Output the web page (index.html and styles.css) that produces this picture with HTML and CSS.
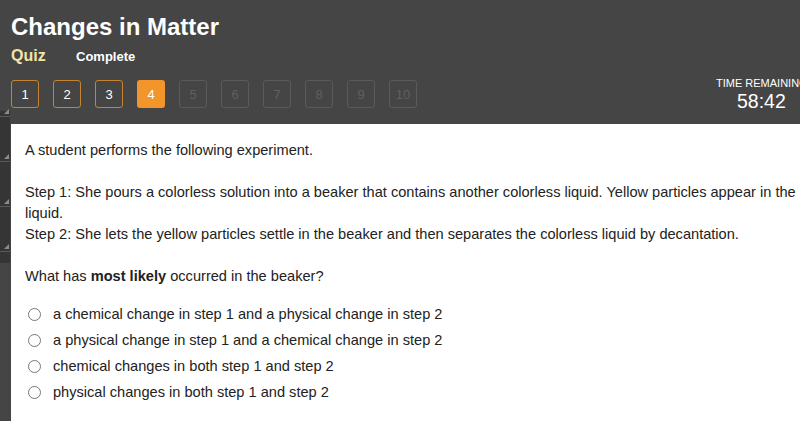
FILE: index.html
```html
<!DOCTYPE html>
<html>
<head>
<meta charset="utf-8">
<link rel="stylesheet" href="styles.css">
</head>
<body>
<div class="page">
  <header class="header">
    <h1 class="title">Changes in Matter</h1>
    <div class="sub">
      <span class="quiz">Quiz</span>
      <span class="status">Complete</span>
    </div>
    <div class="navrow">
      <div class="nums">
        <span class="num done">1</span>
        <span class="num done">2</span>
        <span class="num done">3</span>
        <span class="num active">4</span>
        <span class="num future">5</span>
        <span class="num future">6</span>
        <span class="num future">7</span>
        <span class="num future">8</span>
        <span class="num future">9</span>
        <span class="num future">10</span>
      </div>
      <div class="timer">
        <div class="tlabel">TIME REMAINING</div>
        <div class="tval">58:42</div>
      </div>
    </div>
  </header>
  <div class="main">
    <div class="side">
      <div class="tab first"></div>
      <div class="tab"></div>
      <div class="tab"></div>
      <div class="tab"></div>
      <div class="tab last"></div>
    </div>
    <div class="content">
      <p>A student performs the following experiment.</p>
      <p>Step 1: She pours a colorless solution into a beaker that contains another colorless liquid. Yellow particles appear in the liquid.<br>Step 2: She lets the yellow particles settle in the beaker and then separates the colorless liquid by decantation.</p>
      <p>What has <b>most likely</b> occurred in the beaker?</p>
      <ul class="opts">
        <li><span class="radio"></span>a chemical change in step 1 and a physical change in step 2</li>
        <li><span class="radio"></span>a physical change in step 1 and a chemical change in step 2</li>
        <li><span class="radio"></span>chemical changes in both step 1 and step 2</li>
        <li><span class="radio"></span>physical changes in both step 1 and step 2</li>
      </ul>
    </div>
  </div>
</div>
</body>
</html>
```
FILE: styles.css
```css
html, body {
  margin: 0;
  padding: 0;
  background: #454545;
  overflow: hidden;
}
.page {
  width: 800px;
  height: 421px;
  display: flex;
  flex-direction: column;
  font-family: "Liberation Sans", Arial, sans-serif;
}
.header {
  padding: 13px 0 0 11px;
  height: 111px;
  box-sizing: border-box;
  background: #454545;
}
.title {
  margin: 0;
  font-size: 24px;
  line-height: 28px;
  font-weight: bold;
  color: #ffffff;
}
.sub {
  display: flex;
  align-items: baseline;
  margin-top: 6px;
  height: 22px;
}
.quiz {
  font-size: 16px;
  font-weight: bold;
  color: #f4e3a8;
  width: 65px;
}
.status {
  font-size: 13px;
  font-weight: bold;
  color: #ffffff;
}
.navrow {
  display: flex;
  justify-content: space-between;
  margin-top: 11px;
}
.nums {
  display: flex;
  gap: 14px;
}
.num {
  width: 28px;
  height: 28px;
  box-sizing: border-box;
  border-radius: 3px;
  display: flex;
  align-items: center;
  justify-content: center;
  font-size: 13px;
}
.num.done {
  border: 1px solid #c8832e;
  color: #ffffff;
}
.num.active {
  background: #f2952a;
  color: #ffffff;
}
.num.future {
  border: 1px solid #5a5a5a;
  color: #606060;
}
.timer {
  width: 84px;
  margin-top: -3px;
  white-space: nowrap;
  overflow: hidden;
}
.tlabel {
  font-size: 11px;
  line-height: 13px;
  color: #ffffff;
}
.tval {
  font-size: 19.5px;
  line-height: 22px;
  color: #ffffff;
  padding-left: 21px;
}
.main {
  flex: 1;
  display: flex;
  min-height: 0;
}
.side {
  width: 10px;
  margin-right: 1px;
  display: flex;
  flex-direction: column;
}
.tab {
  height: 44px;
  background: #353535;
  border-bottom: 1px solid #5a5a5a;
  position: relative;
  flex: none;
}
.tab::after {
  content: "";
  position: absolute;
  right: 1px;
  bottom: 2px;
  width: 0;
  height: 0;
  border-left: 5px solid transparent;
  border-bottom: 5px solid #8c8c8c;
}
.tab.first {
  height: 5px;
}
.tab.last {
  height: 11px;
  border-bottom: none;
}
.tab.last::after {
  display: none;
}
.content {
  flex: 1;
  background: #ffffff;
  margin-top: 13px;
  padding: 16px 0 0 14px;
  font-size: 14.6px;
  line-height: 21px;
  color: #222222;
}
.content p {
  margin: 0 0 20.5px 0;
}
.content p:nth-child(2) {
  margin-bottom: 21.5px;
}
.opts {
  list-style: none;
  margin: 0;
  padding: 0 0 0 3px;
  margin-top: -6px;
}
.opts li {
  display: flex;
  align-items: center;
  height: 26px;
}
.radio {
  width: 11px;
  height: 11px;
  border: 1px solid #777;
  border-radius: 50%;
  margin-right: 12px;
  flex: none;
}
```
